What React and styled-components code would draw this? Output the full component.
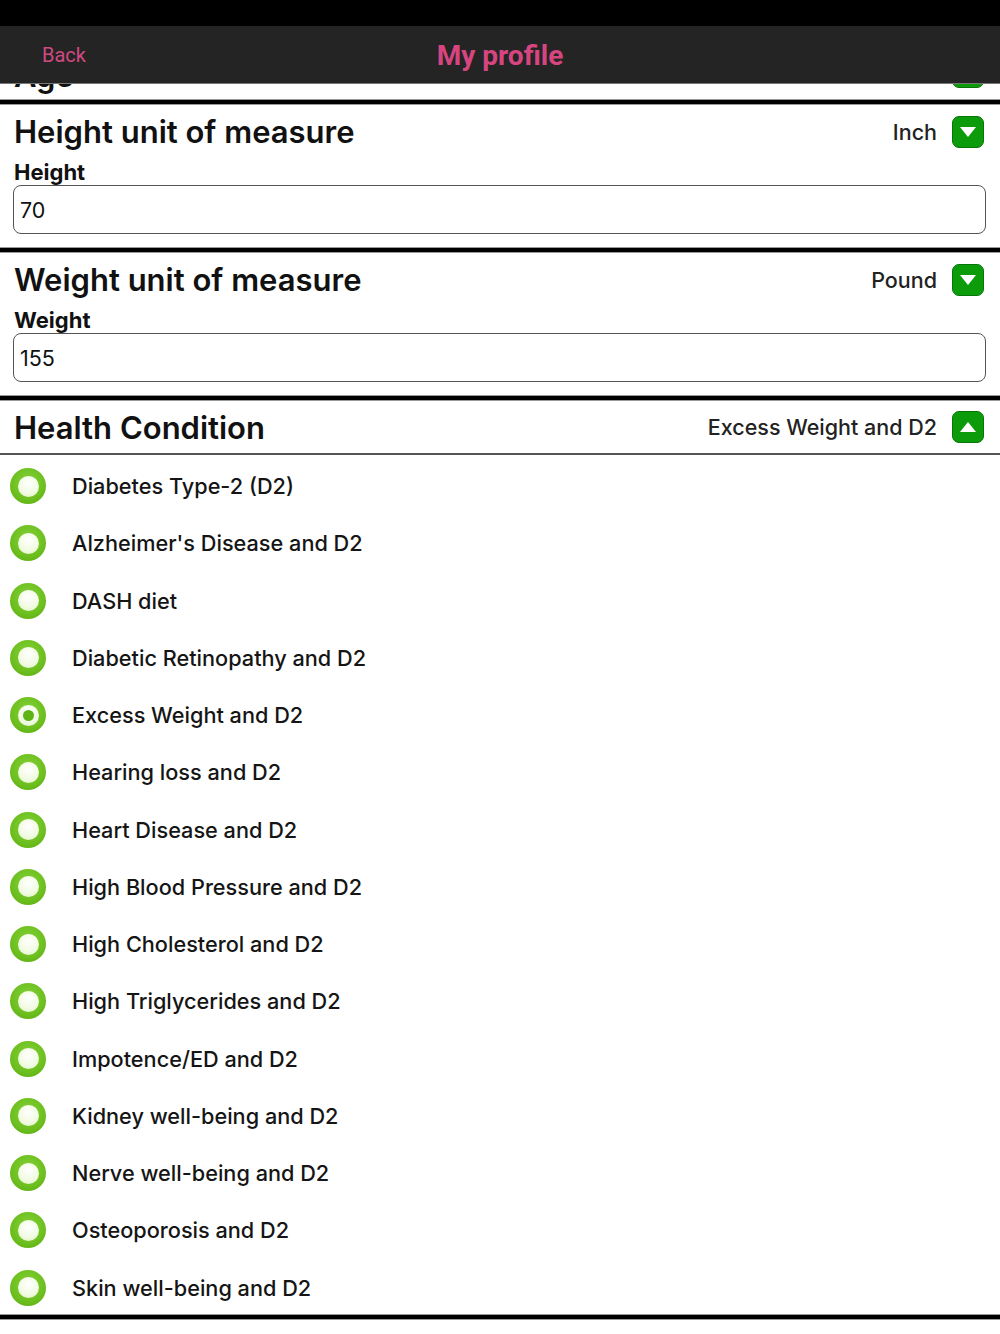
import React from "react";
import styled, { createGlobalStyle } from "styled-components";

const Global = createGlobalStyle`
  html, body { margin: 0; padding: 0; background: #fff; }
  body { font-family: Inter, "Noto Sans", "Liberation Sans", sans-serif; -webkit-font-smoothing: antialiased; }
  * { box-sizing: border-box; }
`;

const Page = styled.div`
  width: 1000px;
  height: 1334px;
  overflow: hidden;
  display: flex;
  flex-direction: column;
  background: #fff;
`;

const StatusBar = styled.div`
  height: 26px;
  background: #000;
  flex-shrink: 0;
`;

const NavBar = styled.div`
  height: 58px;
  flex-shrink: 0;
  background: #242424;
  border-bottom: 1px solid #777;
  display: grid;
  grid-template-columns: 1fr auto 1fr;
  align-items: center;
  padding: 0 0 0 42px;
`;

const BackButton = styled.span`
  color: #cf4a80;
  font-size: 20px;
  font-family: Roboto, "Noto Sans", sans-serif;
  justify-self: start;
`;

const NavTitle = styled.span`
  color: #d6457f;
  font-size: 28px;
  font-weight: 700;
  font-family: Roboto, "Noto Sans", sans-serif;
  margin-left: -42px;
  padding-top: 2px;
`;

const Stub = styled.div`
  height: 15px;
  overflow: hidden;
  display: flex;
  flex-direction: column;
  justify-content: flex-end;
  flex-shrink: 0;
`;

const StubInner = styled.div`
  padding: 0 16px 11px 14px;
`;

const ThickRule = styled.div`
  height: 6px;
  background: #000;
  border-top: 1px solid #999;
  border-bottom: 1px solid #999;
  flex-shrink: 0;
`;

const Section = styled.section`
  padding: 11px 14px 13px 13px;
  display: flex;
  flex-direction: column;
  flex-shrink: 0;
`;

const HeaderRow = styled.div`
  display: flex;
  align-items: center;
  height: 32px;
  padding: ${(p) => (p.$padded ? "0 2px 0 1px" : "0")};
`;

const Title = styled.h2`
  margin: 0;
  flex: 1;
  font-size: 31px;
  line-height: 32px;
  font-weight: 600;
  color: #111;
  padding-top: ${(p) => p.$drop || 0}px;
`;

const Value = styled.span`
  font-size: 21.5px;
  font-weight: 500;
  color: #222;
  margin-right: 15px;
`;

const DropButton = styled.span`
  width: 32px;
  height: 32px;
  border-radius: 7px;
  background: #0b9b0b;
  border: 1.5px solid #087508;
  display: flex;
  align-items: center;
  justify-content: center;
  flex-shrink: 0;
`;

const Label = styled.div`
  margin: 12px 0 1px 1px;
  height: 24px;
  line-height: 24px;
  font-size: 22px;
  font-weight: 700;
  color: #111;
`;

const Input = styled.div`
  height: 49px;
  border: 1.5px solid #555;
  border-radius: 8px;
  display: flex;
  align-items: center;
  padding-left: 6px;
  font-size: 21.5px;
  color: #111;
`;

const ListHeader = styled.div`
  display: flex;
  align-items: center;
  height: 54px;
  padding: 0 16px 0 14px;
  border-bottom: 2px solid #555;
  flex-shrink: 0;
`;

const List = styled.div`
  display: flex;
  flex-direction: column;
  flex-shrink: 0;
`;

const Item = styled.div`
  height: 57.25px;
  display: flex;
  align-items: center;
  padding: 5px 0 0 10px;
  gap: 26px;
`;

const Radio = styled.span`
  width: 36px;
  height: 36px;
  border-radius: 50%;
  background: radial-gradient(circle at 50% 40%, #86d23a 0%, #6cbf1e 60%, #55a80c 100%);
  display: flex;
  align-items: center;
  justify-content: center;
  flex-shrink: 0;
`;

const RadioInner = styled.span`
  width: 21px;
  height: 21px;
  border-radius: 50%;
  background: radial-gradient(circle at 50% 35%, #ffffff 0%, #f2fbe3 55%, #dff3c2 100%);
  display: flex;
  align-items: center;
  justify-content: center;
`;

const RadioDot = styled.span`
  width: 11px;
  height: 11px;
  border-radius: 50%;
  background: #5fb314;
`;

const ItemText = styled.span`
  font-size: 21.7px;
  font-weight: 500;
  color: #151515;
`;

const NextSection = styled.div`
  padding: 10px 14px 0;
  font-size: 26px;
  font-weight: 600;
  color: #666;
  white-space: nowrap;
`;

const Triangle = ({ up }) => (
  <svg width="18" height="12" viewBox="0 0 18 12">
    <path d={up ? "M9 1 L17 11 L1 11 Z" : "M1 1 L17 1 L9 11 Z"} fill="#fff" />
  </svg>
);

const conditions = [
  "Diabetes Type-2 (D2)",
  "Alzheimer's Disease and D2",
  "DASH diet",
  "Diabetic Retinopathy and D2",
  "Excess Weight and D2",
  "Hearing loss and D2",
  "Heart Disease and D2",
  "High Blood Pressure and D2",
  "High Cholesterol and D2",
  "High Triglycerides and D2",
  "Impotence/ED and D2",
  "Kidney well-being and D2",
  "Nerve well-being and D2",
  "Osteoporosis and D2",
  "Skin well-being and D2",
];

const MeasureSection = ({ title, unit, label, value }) => (
  <Section>
    <HeaderRow $padded>
      <Title>{title}</Title>
      <Value>{unit}</Value>
      <DropButton>
        <Triangle />
      </DropButton>
    </HeaderRow>
    <Label>{label}</Label>
    <Input>{value}</Input>
  </Section>
);

export default function App() {
  const selected = "Excess Weight and D2";
  return (
    <Page>
      <Global />
      <StatusBar />
      <NavBar>
        <BackButton>Back</BackButton>
        <NavTitle>My profile</NavTitle>
        <span />
      </NavBar>
      <Stub>
        <StubInner>
          <HeaderRow>
            <Title $drop={7}>Age</Title>
            <DropButton>
              <Triangle />
            </DropButton>
          </HeaderRow>
        </StubInner>
      </Stub>
      <ThickRule />
      <MeasureSection title="Height unit of measure" unit="Inch" label="Height" value="70" />
      <ThickRule />
      <MeasureSection title="Weight unit of measure" unit="Pound" label="Weight" value="155" />
      <ThickRule />
      <ListHeader>
        <Title $drop={2}>Health Condition</Title>
        <Value>Excess Weight and D2</Value>
        <DropButton>
          <Triangle up />
        </DropButton>
      </ListHeader>
      <List>
        {conditions.map((c) => (
          <Item key={c}>
            <Radio>
              <RadioInner>{c === selected && <RadioDot />}</RadioInner>
            </Radio>
            <ItemText>{c}</ItemText>
          </Item>
        ))}
      </List>
      <ThickRule />
      <NextSection>Current medicine (if any) and frequency</NextSection>
    </Page>
  );
}
